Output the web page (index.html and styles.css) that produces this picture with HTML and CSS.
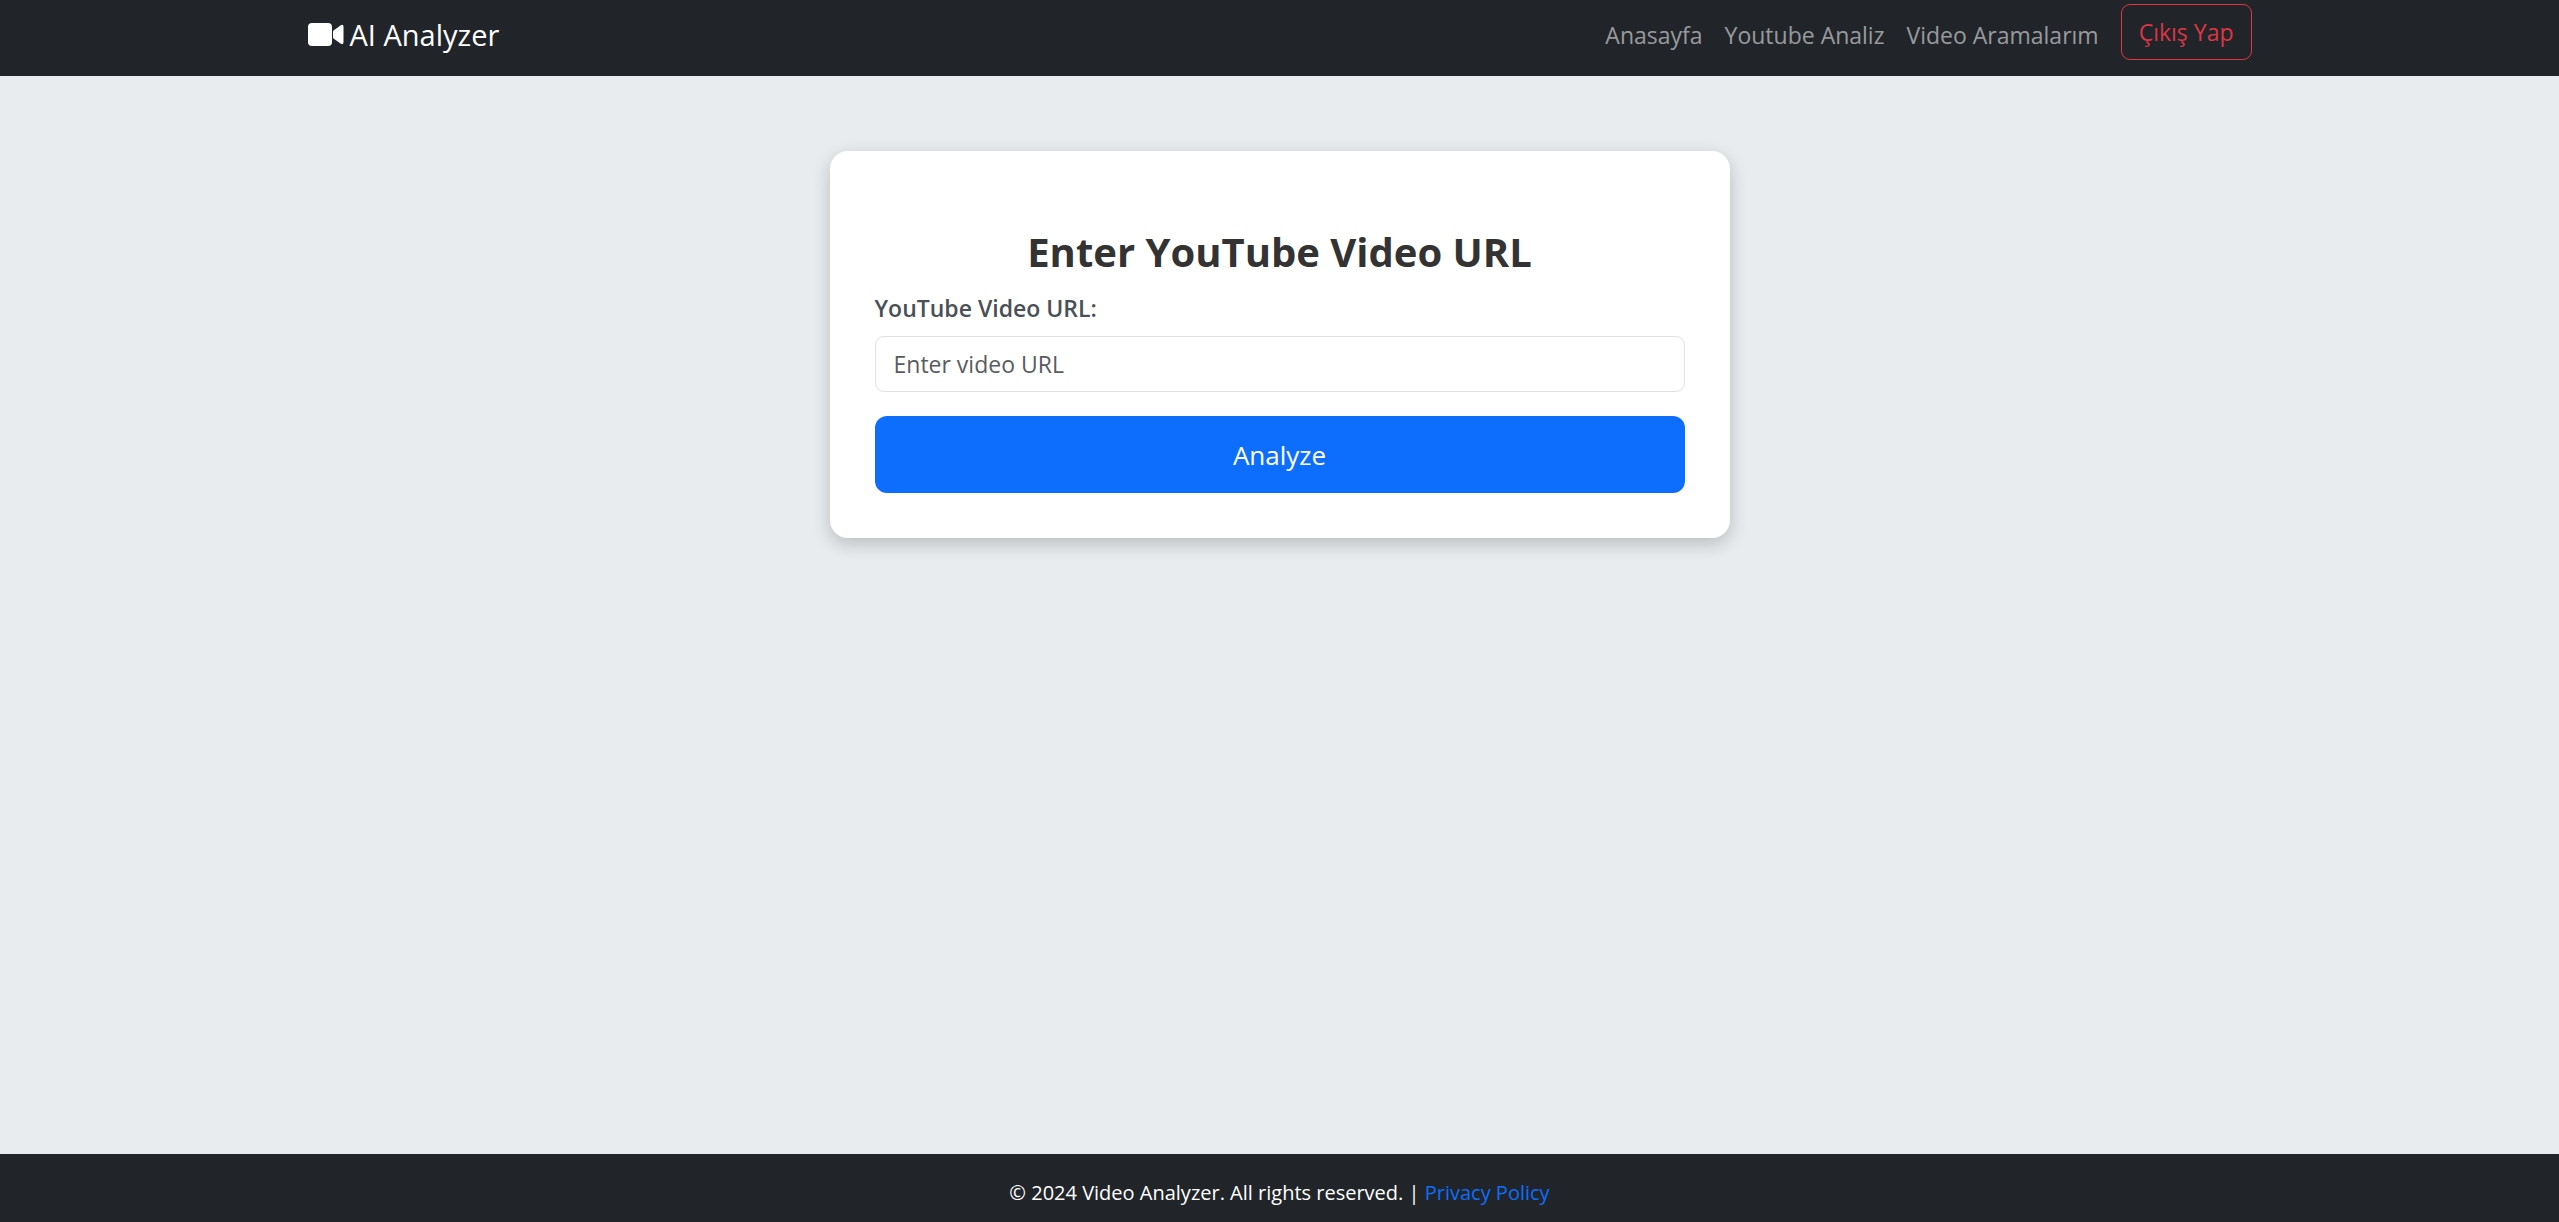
FILE: index.html
```html
<!DOCTYPE html>
<html lang="tr">
<head>
  <meta charset="utf-8">
  <meta name="viewport" content="width=device-width, initial-scale=1">
  <title>AI Analyzer</title>
  <link rel="stylesheet" href="styles.css">
</head>
<body>
  <header class="navbar">
    <div class="container">
      <a class="brand" href="#">
        <svg class="brand-icon" viewBox="0 0 36 24" aria-hidden="true">
          <rect x="0" y="0" width="24" height="23" rx="4"/>
          <path d="M25.500 7.500 L32.500 2.400 Q35.500 .8 35.500 4 V19 Q35.500 22.200 32.500 20.600 L25.500 15.500 Q25 15 25 14 V9 Q25 8 25.500 7.500 Z"/>
        </svg>
        <span>AI Analyzer</span>
      </a>
      <nav class="nav">
        <a class="nav-link" href="#">Anasayfa</a>
        <a class="nav-link" href="#">Youtube Analiz</a>
        <a class="nav-link" href="#">Video Aramalarım</a>
        <button class="btn-logout" type="button">Çıkış Yap</button>
      </nav>
    </div>
  </header>

  <main class="main">
    <section class="card">
      <h1 class="title">Enter YouTube Video URL</h1>
      <form class="form">
        <label class="label" for="video-url">YouTube Video URL:</label>
        <input class="input" id="video-url" type="text" placeholder="Enter video URL">
        <button class="btn-analyze" type="button">Analyze</button>
      </form>
    </section>
  </main>

  <footer class="footer">
    <p class="footer-text">© 2024 Video Analyzer. All rights reserved. | <a class="footer-link" href="#">Privacy Policy</a></p>
  </footer>
</body>
</html>
```
FILE: styles.css
```css
* {
  box-sizing: border-box;
}

body {
  display: flex;
  flex-direction: column;
  min-height: 100vh;
  margin: 0;
  background: #e8ecef;
  color: #212529;
  font-family: "Segoe UI", "Open Sans", "Noto Sans", sans-serif;
  font-size: 23px;
  line-height: 36px;
}

a {
  text-decoration: none;
}

input,
button {
  font: inherit;
}

.navbar {
  background: #212529;
}

.container {
  display: flex;
  align-items: flex-start;
  justify-content: space-between;
  width: 100%;
  max-width: 1980px;
  margin: 0 auto;
  padding: 4px 18px 10px;
}

.brand {
  display: flex;
  align-items: center;
  gap: 6px;
  color: #fff;
  font-size: 29px;
  line-height: 62px;
}

.brand-icon {
  width: 36px;
  height: 24px;
  fill: #fff;
}

.nav {
  display: flex;
  align-items: flex-start;
  gap: 22px;
}

.nav-link {
  color: rgba(255, 255, 255, 0.55);
  line-height: 62px;
}

.btn-logout {
  height: 56px;
  padding: 0 17px;
  border: 1px solid #dc3545;
  border-radius: 9px;
  background: transparent;
  color: #dc3545;
}

.main {
  flex: 1;
  padding: 75px 24px;
}

.card {
  max-width: 900px;
  margin: 0 auto;
  padding: 75px 45px 45px;
  border-radius: 18px;
  background: #fff;
  box-shadow: 0 6px 18px rgba(0, 0, 0, 0.2);
}

.title {
  margin: 0 0 12px;
  color: #333;
  font-size: 40px;
  font-weight: 700;
  line-height: 52px;
  text-align: center;
}

.form {
  display: flex;
  flex-direction: column;
}

.label {
  margin-bottom: 10px;
  color: #495057;
  font-weight: 600;
}

.input {
  height: 56px;
  margin-bottom: 24px;
  padding: 0 18px;
  border: 1px solid #dee2e6;
  border-radius: 9px;
  background: #fff;
  color: #212529;
}

.input::placeholder {
  color: #595c5f;
  opacity: 1;
}

.btn-analyze {
  height: 77px;
  border: 0;
  border-radius: 12px;
  background: #0d6efd;
  color: #fff;
  font-size: 26px;
}

.footer {
  padding: 21px 24px 11px;
  background: #212529;
  color: #fff;
  text-align: center;
}

.footer-text {
  margin: 0;
  font-size: 20px;
}

.footer-link {
  color: #0d6efd;
}
```
